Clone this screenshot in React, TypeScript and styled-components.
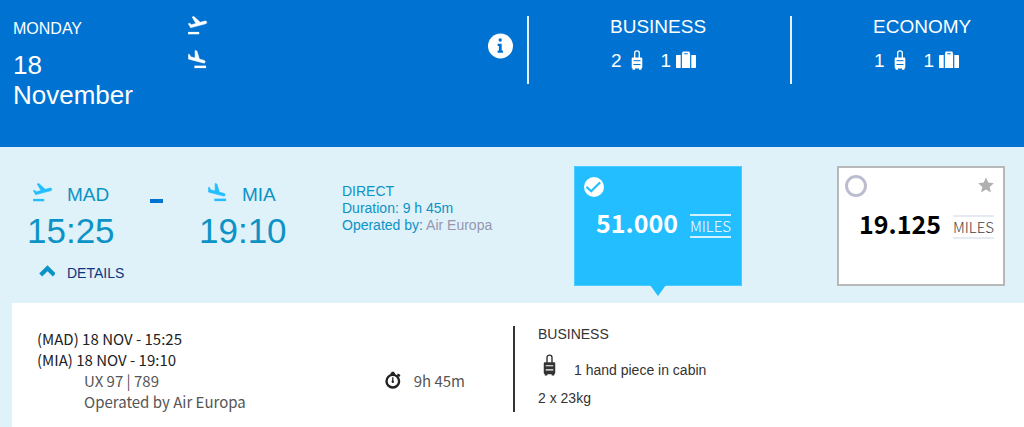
import React from "react";
import styled, { createGlobalStyle, css } from "styled-components";

const sans = `"Liberation Sans", Arial, sans-serif`;
const humanist = `"Noto Sans CJK SC", "Noto Sans", sans-serif`;

const GlobalStyle = createGlobalStyle`
  *, *::before, *::after { box-sizing: border-box; }
  body { margin: 0; background: #dff1f9; font-family: ${sans}; }
  h2, h3, p { margin: 0; padding: 0; font-weight: 400; }
`;

const Page = styled.main`
  min-height: 100vh;
  display: flex;
  flex-direction: column;
`;

const columns = css`
  display: grid;
  grid-template-columns: minmax(0, 1fr) 263px 234px;
`;

const Header = styled.header`
  ${columns}
  min-height: 147px;
  padding-top: 16px;
  background: #0073d2;
  color: #fff;
`;

const Journey = styled.div`
  display: grid;
  grid-template-columns: 175px 1fr auto;
  align-items: start;
  padding: 0 14px 0 13px;
`;

const Weekday = styled.p`
  padding-top: 3px;
  font-size: 16px;
  line-height: 20px;
`;

const DayMonth = styled.h2`
  width: 130px;
  margin-top: 11px;
  font-size: 26px;
  line-height: 30px;
`;

const PlaneStack = styled.div`
  display: grid;
  gap: 14px;
`;

const InfoButton = styled.button`
  display: block;
  margin-top: 17px;
  padding: 0;
  border: 0;
  background: none;
  color: #fff;
  cursor: pointer;

  svg { display: block; }
`;

const CabinHead = styled.section`
  align-self: start;
  height: 68px;
  padding-left: 81px;
  border-left: 2px solid #e6f2fb;
`;

const CabinTitle = styled.h3`
  font-size: 19px;
  line-height: 22px;
`;

const Allowance = styled.p`
  display: flex;
  align-items: center;
  gap: 18px;
  margin-top: 11px;
  padding-left: 1px;
  font-size: 19px;
  line-height: 24px;
`;

const Count = styled.span<{ $hold?: boolean }>`
  display: flex;
  align-items: center;
  gap: ${(p) => (p.$hold ? 5 : 9)}px;

  svg {
    display: block;
    margin-bottom: 2px;
  }
`;

const FlightRow = styled.section`
  ${columns}
  min-height: 156px;
  padding-top: 19px;
`;

const FlightInfo = styled.div`
  display: grid;
  grid-template-columns: 315px 1fr;
  padding-top: 17px;
`;

const Legs = styled.div`
  padding-left: 27px;
  color: #0c93c6;
`;

const LegGrid = styled.div`
  display: grid;
  grid-template-columns: 122px 50px 94px;
  align-items: start;
`;

const Airport = styled.div<{ $indent: number }>`
  display: flex;
  gap: 14px;
  padding-left: ${(p) => p.$indent}px;
  font-size: 19px;
  line-height: 24px;
`;

const Time = styled.div`
  margin-top: 3px;
  font-size: 35px;
  line-height: 42px;
  white-space: nowrap;
`;

const Dash = styled.div`
  width: 13px;
  height: 4px;
  margin: 16px 0 0 1px;
  background: #0073d2;
`;

const DetailsButton = styled.button`
  display: flex;
  align-items: center;
  gap: 12px;
  margin-top: 12px;
  padding: 0 0 0 12px;
  border: 0;
  background: none;
  color: #0d3580;
  font: 14px/18px ${sans};
  cursor: pointer;

  svg { margin-bottom: 4px; }
`;

const Facts = styled.div`
  padding-left: 27px;
  color: #0c93c6;
  font-size: 14px;
  line-height: 17px;
  white-space: nowrap;
`;

const Carrier = styled.span`
  color: #9797b0;
`;

const Fare = styled.label<{ $selected?: boolean }>`
  position: relative;
  justify-self: start;
  width: 168px;
  height: 120px;
  margin-left: 47px;
  padding: ${(p) => (p.$selected ? "10px 10px 0 9px" : "7px 9px 0 6px")};
  border: ${(p) => (p.$selected ? "1px solid #4ccbfd" : "2px solid #b8b8b8")};
  background: ${(p) => (p.$selected ? "#22beff" : "#fff")};
  color: ${(p) => (p.$selected ? "#fff" : "#000")};
  font-family: ${humanist};
  cursor: pointer;

  ${(p) =>
    p.$selected &&
    css`
      &::after {
        content: "";
        position: absolute;
        top: 118px;
        left: 75px;
        border: 8px solid transparent;
        border-top: 11px solid #22beff;
        border-bottom: 0;
      }
    `}
`;

const FareTop = styled.div<{ $selected?: boolean }>`
  position: relative;
  display: flex;
  justify-content: space-between;
  height: ${(p) => (p.$selected ? 24 : 27)}px;
`;

const Radio = styled.input`
  appearance: none;
  width: 22px;
  height: 22px;
  margin: 0;
  border: 3px solid #bcbccf;
  border-radius: 50%;
  background: #fff;

  &:checked {
    width: 20px;
    height: 20px;
    border: 0;
  }
`;

const Tick = styled.svg`
  position: absolute;
  top: 0;
  left: 0;
  pointer-events: none;
`;

const Price = styled.div`
  display: flex;
  justify-content: flex-end;
  align-items: flex-start;
  gap: 12px;
  margin-top: 8px;
`;

const Amount = styled.span`
  font-size: 25px;
  font-weight: 700;
  line-height: 26px;
`;

const Unit = styled.span<{ $selected?: boolean }>`
  margin-top: 5px;
  border: solid ${(p) => (p.$selected ? "#d0f1ff" : "#e6eaf2")};
  border-width: 2px 0;
  color: ${(p) => (p.$selected ? "#fff" : "#444")};
  font-size: 15px;
  font-weight: 300;
  line-height: 20px;
`;

const Details = styled.section`
  flex: 1;
  display: grid;
  grid-template-columns: minmax(0, 1fr) 511px;
  margin-left: 12px;
  padding: 23px 0 15px;
  background: #fff;
`;

const Segment = styled.div`
  display: flex;
  justify-content: space-between;
  padding: 2px 48px 0 25px;
  color: #555;
  font-family: ${humanist};
  font-size: 15px;
  font-weight: 300;
  line-height: 21px;
`;

const Stop = styled.p`
  color: #222;
  font-weight: 400;
`;

const Note = styled.p`
  padding-left: 47px;
`;

const Elapsed = styled.p`
  display: flex;
  align-items: center;
  align-self: flex-start;
  gap: 13px;
  padding-top: 42px;

  svg { margin-bottom: 2px; }
`;

const Baggage = styled.div`
  height: 86px;
  padding-left: 23px;
  border-left: 2px solid #333;
  color: #333;
  font-size: 14px;
  line-height: 16px;
`;

const CabinPiece = styled.p`
  display: flex;
  align-items: flex-end;
  gap: 18px;
  margin: 12px 0;
  padding-left: 5px;

  svg { margin-bottom: 2px; }
`;

const takeoffPath =
  "M22.07 9.64c-.21-.8-1.04-1.28-1.84-1.06L14.92 10l-6.9-6.43-1.93.51 4.14 7.17-4.97 1.33-1.97-1.54-1.45.39 1.82 3.16.77 1.33 1.6-.43 5.31-1.42 4.35-1.16L21 11.49c.81-.23 1.28-1.05 1.07-1.85z";
const landPath =
  "M9.68 13.27l4.35 1.16 5.31 1.42c.8.21 1.62-.26 1.84-1.06.21-.8-.26-1.62-1.06-1.84l-5.31-1.42-2.76-9.02L10.12 2v8.28L5.15 8.95l-.93-2.32-1.45-.39v5.17l1.6.43 5.31 1.43z";

const Takeoff = ({ color = "currentColor" }: { color?: string }) => (
  <svg width="20" height="20" viewBox="1.5 3 22 22" fill={color} aria-hidden="true">
    <path d={takeoffPath} stroke={color} strokeWidth=".6" />
    <path d="M1.6 20.5h12.2v2.6H1.6z" />
  </svg>
);

const Land = ({ color = "currentColor" }: { color?: string }) => (
  <svg width="20" height="20" viewBox="2.3 1.5 22 22" fill={color} aria-hidden="true">
    <path d={landPath} stroke={color} strokeWidth=".6" />
    <path d="M9.3 18.7h12.9v2.7H9.3z" />
  </svg>
);

const HandBag = ({ stripe, large }: { stripe: string; large?: boolean }) => (
  <svg width={large ? 13 : 12} height={large ? 22 : 20} viewBox="0 0 12 20" aria-hidden="true">
    <path d="M3.700 8V3Q3.700.9 6 .9T8.300 3v5" fill="none" stroke="currentColor" strokeWidth="1.300" />
    <path
      d="M1.700 7.500h8.600q1 0 1 1v8.800q0 1-.9 1.100v1.300H8v-1.200H4v1.200H1.600v-1.300q-.9-.1-.9-1.100V8.500q0-1 1-1z"
      fill="currentColor"
    />
    <path d="M2.500 10.700h7M2.500 14.500h7" stroke={stripe} strokeWidth="1" />
  </svg>
);

const HoldBag = () => (
  <svg width="20" height="18" viewBox="0 0 20 18" fill="currentColor" aria-hidden="true">
    <path d="M.8 4h3.900v13H.8q-.8 0-.8-.8V4.800Q0 4 .8 4zM15.300 4h3.900q.8 0 .8.8v11.400q0 .8-.8.8h-3.900z" />
    <path d="M5.900 2.500H6.300V1.300Q6.300.5 7.100.5h5.800q.8 0 .8.8v1.200h.4V17H5.900zM8.200 2.200v1h3.600v-1z" fillRule="evenodd" />
  </svg>
);

const Stopwatch = () => (
  <svg width="16" height="18" viewBox="0 0 16 18" aria-hidden="true">
    <circle cx="7.800" cy="10.200" r="6.300" fill="none" stroke="#222" strokeWidth="2.400" />
    <path d="M6.500.8h2.600v1H10v1.600H5.600V1.800h.9zM12.900 2.600l2.600 1.500-1.200 2-2.500-1.500z" fill="#222" />
    <path d="M7.800 6.200v4.500" stroke="#222" strokeWidth="1.300" />
    <circle cx="7.800" cy="10.800" r="1.200" fill="#222" />
  </svg>
);

const Cabin = ({ name, hand, hold }: { name: string; hand: number; hold: number }) => (
  <CabinHead>
    <CabinTitle>{name}</CabinTitle>
    <Allowance>
      <Count>
        {hand} <HandBag stripe="#0073d2" />
      </Count>
      <Count $hold>
        {hold} <HoldBag />
      </Count>
    </Allowance>
  </CabinHead>
);

export default function App() {
  return (
    <Page>
      <GlobalStyle />
      <Header>
        <Journey>
          <div>
            <Weekday>MONDAY</Weekday>
            <DayMonth>18 November</DayMonth>
          </div>
          <PlaneStack>
            <Takeoff />
            <Land />
          </PlaneStack>
          <InfoButton type="button" aria-label="Information">
            <svg width="26" height="26" viewBox="0 0 26 26" aria-hidden="true">
              <circle cx="13.500" cy="13" r="12.500" fill="currentColor" />
              <circle cx="13.200" cy="7" r="1.700" fill="#0073d2" />
              <path d="M10.600 10.800h4.100v6.800h1.300v2.100h-5.400v-2.100h1.300v-4.700h-1.300z" fill="#0073d2" />
            </svg>
          </InfoButton>
        </Journey>
        <Cabin name="BUSINESS" hand={2} hold={1} />
        <Cabin name="ECONOMY" hand={1} hold={1} />
      </Header>

      <FlightRow>
        <FlightInfo>
          <Legs>
            <LegGrid>
              <div>
                <Airport $indent={6}>
                  <Takeoff color="#22beff" />
                  MAD
                </Airport>
                <Time>15:25</Time>
              </div>
              <Dash />
              <div>
                <Airport $indent={9}>
                  <Land color="#22beff" />
                  MIA
                </Airport>
                <Time>19:10</Time>
              </div>
            </LegGrid>
            <DetailsButton type="button" aria-expanded="true">
              <svg width="16" height="12" viewBox="0 0 16 12" aria-hidden="true">
                <path d="M1.700 10L8.500 3.200l6.800 6.800" fill="none" stroke="#0c93c6" strokeWidth="4.200" />
              </svg>
              DETAILS
            </DetailsButton>
          </Legs>
          <Facts>
            <p>DIRECT</p>
            <p>Duration: 9 h 45m</p>
            <p>
              Operated by: <Carrier>Air Europa</Carrier>
            </p>
          </Facts>
        </FlightInfo>

        <Fare $selected>
          <FareTop $selected>
            <Radio type="radio" name="fare" value="business" defaultChecked />
            <Tick width="20" height="20" viewBox="0 0 20 20" aria-hidden="true">
              <path d="M3 10.500l4.200 3.700 8.300-8.200" fill="none" stroke="#22beff" strokeWidth="2.200" strokeLinecap="round" />
            </Tick>
          </FareTop>
          <Price>
            <Amount>51.000</Amount>
            <Unit $selected>MILES</Unit>
          </Price>
        </Fare>

        <Fare>
          <FareTop>
            <Radio type="radio" name="fare" value="economy" />
            <svg width="16" height="22" viewBox="0 0 16 22" aria-hidden="true">
              <path
                d="M8 2.500l2.300 5.100 5.500.6-4.100 3.700 1.200 5.500L8 14.600l-4.900 2.800 1.200-5.500L.2 8.200l5.500-.6z"
                fill="#b0b0b0"
              />
            </svg>
          </FareTop>
          <Price>
            <Amount>19.125</Amount>
            <Unit>MILES</Unit>
          </Price>
        </Fare>
      </FlightRow>

      <Details>
        <Segment>
          <div>
            <Stop>(MAD) 18 NOV - 15:25</Stop>
            <Stop>(MIA) 18 NOV - 19:10</Stop>
            <Note>UX 97 | 789</Note>
            <Note>Operated by Air Europa</Note>
          </div>
          <Elapsed>
            <Stopwatch />
            9h 45m
          </Elapsed>
        </Segment>
        <Baggage>
          <p>BUSINESS</p>
          <CabinPiece>
            <HandBag stripe="#fff" large />
            1 hand piece in cabin
          </CabinPiece>
          <p>2 x 23kg</p>
        </Baggage>
      </Details>
    </Page>
  );
}
